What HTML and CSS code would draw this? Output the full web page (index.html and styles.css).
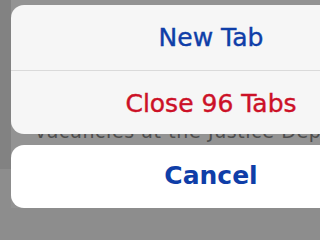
FILE: index.html
```html
<!DOCTYPE html>
<html>
<head>
<meta charset="utf-8">
<link rel="stylesheet" href="styles.css">
</head>
<body>
<div class="page">
  <div class="backdrop">
    <div class="side"></div>
    <div class="content">
      <p class="story">vacancies at the Justice Department</p>
    </div>
  </div>
  <div class="sheet">
    <div class="group">
      <div class="row row-first action">New Tab</div>
      <div class="row row-second destructive">Close 96 Tabs</div>
    </div>
    <div class="cancel">Cancel</div>
  </div>
</div>
</body>
</html>
```

FILE: styles.css
```css
html, body {
  margin: 0;
  padding: 0;
  overflow: hidden;
  background: #8d8d8d;
}
body {
  font-family: "DejaVu Sans", sans-serif;
}
.page {
  position: relative;
  width: max(300px, 100vw);
  height: max(220px, 100vh);
  overflow: hidden;
  background: #8d8d8d;
}
.backdrop {
  display: flex;
  height: 100%;
}
.side {
  width: 11px;
  height: 169px;
  background: #828282;
  flex: none;
}
.content {
  flex: 1;
  background: #939393;
  height: 208px;
  padding-left: 24px;
}
.story {
  margin: 119px 0 0;
  font-size: 19px;
  line-height: 24px;
  color: #4e4e4e;
  white-space: nowrap;
  letter-spacing: 0.6px;
}
.sheet {
  position: absolute;
  left: 11px;
  top: 5px;
  width: 400px;
}
.group {
  background: #f6f6f6;
  border-radius: 13px;
  overflow: hidden;
}
.row {
  text-align: center;
  font-size: 25px;
  white-space: nowrap;
  -webkit-text-stroke: 0.4px currentColor;
}
.row-first {
  height: 65px;
  line-height: 65px;
  border-bottom: 1px solid #dadada;
}
.row-second {
  height: 63px;
  line-height: 65px;
}
.action {
  color: #0f3ea8;
}
.destructive {
  color: #cc1127;
}
.cancel {
  margin-top: 11px;
  height: 63px;
  line-height: 62px;
  background: #ffffff;
  border-radius: 13px;
  text-align: center;
  font-size: 25px;
  font-weight: bold;
  color: #0f3ea8;
}
```
